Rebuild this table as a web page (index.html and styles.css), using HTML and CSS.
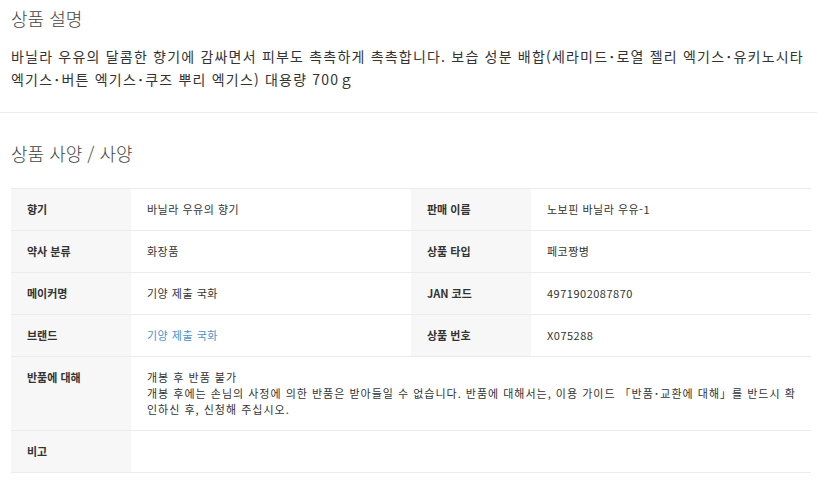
FILE: index.html
```html
<!DOCTYPE html>
<html lang="ko">
<head>
<meta charset="utf-8">
<link rel="stylesheet" href="styles.css">
</head>
<body>
<section class="desc">
  <h2 class="title">상품 설명</h2>
  <p class="desc-text">바닐라 우유의 달콤한 향기에 감싸면서 피부도 촉촉하게 촉촉합니다. 보습 성분 배합(세라미드･로열 젤리 엑기스･유키노시타 엑기스･버튼 엑기스･쿠즈 뿌리 엑기스) 대용량 700ｇ</p>
</section>
<section class="spec">
  <h2 class="title">상품 사양 / 사양</h2>
  <div class="table">
    <div class="row">
      <div class="th">향기</div><div class="td">바닐라 우유의 향기</div>
      <div class="th">판매 이름</div><div class="td">노보핀 바닐라 우유-1</div>
    </div>
    <div class="row">
      <div class="th">약사 분류</div><div class="td">화장품</div>
      <div class="th">상품 타입</div><div class="td">페코짱병</div>
    </div>
    <div class="row">
      <div class="th">메이커명</div><div class="td">기양 제출 국화</div>
      <div class="th">JAN 코드</div><div class="td">4971902087870</div>
    </div>
    <div class="row">
      <div class="th">브랜드</div><div class="td"><a class="link" href="#">기양 제출 국화</a></div>
      <div class="th">상품 번호</div><div class="td">X075288</div>
    </div>
    <div class="row wide">
      <div class="th">반품에 대해</div><div class="td span">개봉 후 반품 불가<br>개봉 후에는 손님의 사정에 의한 반품은 받아들일 수 없습니다. 반품에 대해서는, 이용 가이드 「반품･교환에 대해」를 반드시 확인하신 후, 신청해 주십시오.</div>
    </div>
    <div class="row wide">
      <div class="th">비고</div><div class="td span"></div>
    </div>
  </div>
</section>
</body>
</html>
```

FILE: styles.css
```css
* { box-sizing: border-box; }
html, body { margin: 0; padding: 0; background: #fff; }
body {
  font-family: "Noto Sans CJK KR", "Noto Sans", sans-serif;
  color: #333;
}
.title {
  margin: 0;
  font-size: 18px;
  font-weight: 300;
  color: #444;
  line-height: 24px;
}
.desc {
  padding: 6px 11px 0 11px;
  height: 113px;
  border-bottom: 1px solid #ebebeb;
}
.desc-text {
  margin: 15px 0 0 0;
  font-size: 14px;
  line-height: 23px;
  color: #333;
  letter-spacing: 1.2px;
}
.spec {
  padding: 28px 6px 0 11px;
}
.spec .title { margin-bottom: 23px; }
.table {
  border-top: 1px solid #ebebeb;
  display: flex;
  flex-direction: column;
}
.row {
  display: grid;
  grid-template-columns: 120px 280px 120px 280px;
  border-bottom: 1px solid #ebebeb;
  min-height: 42px;
}
.row.wide { grid-template-columns: 120px 680px; }
.th {
  background: #f7f7f7;
  font-size: 11px;
  font-weight: 700;
  color: #333;
  padding: 13px 16px;
  line-height: 15px;
}
.td {
  font-size: 11px;
  color: #333;
  padding: 13px 16px;
  line-height: 15px;
  letter-spacing: 0.5px;
}
.td.span {
  padding-top: 12px;
  padding-bottom: 13px;
  line-height: 16px;
  padding-right: 14px;
  word-break: break-all;
  letter-spacing: 1px;
}
.link { color: #4a92cc; text-decoration: none; }
```
